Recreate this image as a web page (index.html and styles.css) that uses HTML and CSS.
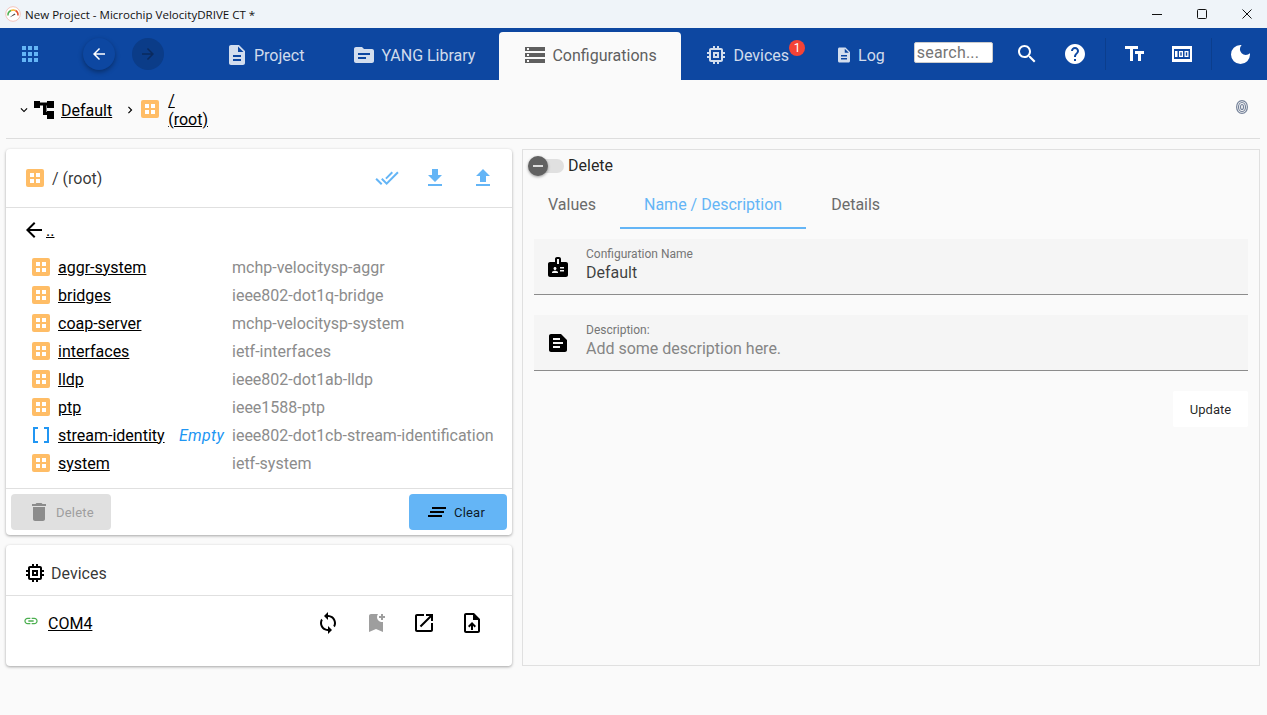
FILE: index.html
```html
<!DOCTYPE html>
<html lang="en">
<head>
    <meta charset="UTF-8">
    <title>New Project - Microchip VelocityDRIVE CT *</title>
    <link rel="stylesheet" href="styles.css">
</head>
<body>
    <svg class="sprite" xmlns="http://www.w3.org/2000/svg">
        <symbol id="i-container" viewBox="0 0 18 18">
            <rect width="18" height="18" rx="2" fill="#ffbd66"/>
            <path d="M4 4h4v4H4zM10 4h4v4h-4zM4 10h4v4H4zM10 10h4v4h-4z" fill="#fff"/>
        </symbol>
        <symbol id="i-memory" viewBox="0 0 24 24"><path d="M15 9H9v6h6V9zm-2 4h-2v-2h2v2zm8-2V9h-2V7c0-1.1-.9-2-2-2h-2V3h-2v2h-2V3H9v2H7c-1.1 0-2 .9-2 2v2H3v2h2v2H3v2h2v2c0 1.1.9 2 2 2h2v2h2v-2h2v2h2v-2h2c1.1 0 2-.9 2-2v-2h2v-2h-2v-2h2zm-4 6H7V7h10v10z"/></symbol>
        <symbol id="i-description" viewBox="0 0 24 24"><path d="M14 2H6c-1.1 0-1.99.9-1.99 2L4 20c0 1.1.89 2 1.99 2H18c1.1 0 2-.9 2-2V8l-6-6zm2 16H8v-2h8v2zm0-4H8v-2h8v2zm-3-5V3.5L18.5 9H13z"/></symbol>
    </svg>

    <header class="titlebar">
        <svg class="app-logo" viewBox="0 0 16 16" width="16" height="16">
            <circle cx="8" cy="8" r="7.300" fill="#fff" stroke="#f3c4bc"/>
            <path d="M3 9.500a5 5 0 0 1 3-5" fill="none" stroke="#4caf50" stroke-width="1.500"/>
            <path d="M6 4.500a5 5 0 0 1 4.500 0" fill="none" stroke="#f5b82e" stroke-width="1.500"/>
            <path d="M10.500 4.500a5 5 0 0 1 2.500 5" fill="none" stroke="#e2502f" stroke-width="1.500"/>
            <path d="M4.500 11.500l5-4 1 1z" fill="#444"/>
        </svg>
        <span class="window-title">New Project - Microchip VelocityDRIVE CT *</span>
        <div class="window-buttons">
            <svg viewBox="0 0 12 12" width="12" height="12"><path d="M1 6.500h10" stroke="#111" fill="none"/></svg>
            <svg viewBox="0 0 12 12" width="12" height="12"><rect x="1.500" y="1.500" width="9" height="9" rx="1" stroke="#111" fill="none"/></svg>
            <svg viewBox="0 0 12 12" width="12" height="12"><path d="M1.500 1.500l9 9M10.500 1.500l-9 9" stroke="#111" fill="none"/></svg>
        </div>
    </header>

    <nav class="navbar">
        <svg class="apps-icon" viewBox="0 0 24 24" width="24" height="24"><path d="M4 8h4V4H4v4zm6 12h4v-4h-4v4zm-6 0h4v-4H4v4zm0-6h4v-4H4v4zm6 0h4v-4h-4v4zm6-10v4h4V4h-4zm-6 4h4V4h-4v4zm6 6h4v-4h-4v4zm0 6h4v-4h-4v4z"/></svg>
        <button class="round-btn">
            <svg viewBox="0 0 24 24" width="18" height="18"><path d="M20 11H7.830l5.590-5.590L12 4l-8 8 8 8 1.410-1.410L7.830 13H20v-2z"/></svg>
        </button>
        <button class="round-btn is-disabled">
            <svg viewBox="0 0 24 24" width="18" height="18"><path d="M12 4l-1.410 1.410L16.170 11H4v2h12.170l-5.580 5.590L12 20l8-8z"/></svg>
        </button>

        <a class="nav-tab tab-project">
            <svg viewBox="0 0 24 24" width="24" height="24"><use href="#i-description"/></svg>Project
        </a>
        <a class="nav-tab tab-yang">
            <svg viewBox="0 0 24 24" width="24" height="24"><path d="M20 6h-8l-2-2H4c-1.100 0-1.990.9-1.990 2L2 18c0 1.100.9 2 2 2h16c1.100 0 2-.9 2-2V8c0-1.100-.9-2-2-2zm-6 10H6v-2h8v2zm4-4H6v-2h12v2z"/></svg>YANG Library
        </a>
        <a class="nav-tab tab-config is-active">
            <svg viewBox="0 0 24 24" width="24" height="24"><path d="M2 20h20v-4H2v4zm2-3h2v2H4v-2zM2 4v4h20V4H2zm4 3H4V5h2v2zm-4 7h20v-4H2v4zm2-3h2v2H4v-2z"/></svg>Configurations
        </a>
        <a class="nav-tab tab-devices">
            <svg viewBox="0 0 24 24" width="24" height="24"><use href="#i-memory"/></svg>Devices
            <span class="badge">1</span>
        </a>
        <a class="nav-tab tab-log">
            <svg viewBox="0 0 24 24" width="18" height="18"><use href="#i-description"/></svg>Log
        </a>

        <input class="search-box" type="text" placeholder="search...">

        <div class="nav-tools">
            <svg class="tool-search" viewBox="0 0 24 24" width="24" height="24"><path d="M15.500 14h-.79l-.28-.27C15.410 12.590 16 11.110 16 9.500 16 5.910 13.090 3 9.500 3S3 5.910 3 9.500 5.910 16 9.500 16c1.610 0 3.090-.59 4.230-1.570l.27.28v.79l5 4.990L20.490 19l-4.990-5zm-6 0C7.010 14 5 11.990 5 9.500S7.010 5 9.500 5 14 7.010 14 9.500 11.990 14 9.500 14z"/></svg>
            <svg class="tool-help" viewBox="0 0 24 24" width="24" height="24"><path d="M12 2C6.480 2 2 6.480 2 12s4.480 10 10 10 10-4.480 10-10S17.520 2 12 2zm1 17h-2v-2h2v2zm2.070-7.750l-.9.920C13.450 12.900 13 13.500 13 15h-2v-.5c0-1.100.45-2.100 1.170-2.830l1.240-1.260c.37-.36.59-.86.59-1.410 0-1.100-.9-2-2-2s-2 .9-2 2H8c0-2.210 1.790-4 4-4s4 1.790 4 4c0 .88-.36 1.680-.93 2.250z"/></svg>
            <span class="tool-divider"></span>
            <svg class="tool-size" viewBox="0 0 24 24" width="24" height="24"><path d="M2 4v3h5v12h3V7h5V4H2zM21 9h-9v3h3v7h3v-7h3V9z"/></svg>
            <svg class="tool-counter" viewBox="0 0 24 24" width="24" height="24"><path fill-rule="evenodd" d="M2 4h20v16H2V4zm2 3v10h16V7H4zm1 2h2.500v6H5V9zm4 0h4v6H9V9zm1.300 1.300v3.400h1.400v-3.400h-1.400zM14.500 9h4v6h-4V9zm1.300 1.300v3.400h1.400v-3.400h-1.400z"/></svg>
            <span class="tool-divider second"></span>
            <svg class="tool-moon" viewBox="0 0 24 24" width="24" height="24"><path d="M11.500 3a9.500 9.500 0 1 0 9.500 9.500c0-.4 0-.8-.1-1.200a5.700 5.700 0 0 1-8.300-8.200c-.3-.1-.7-.1-1.100-.1z"/></svg>
        </div>
    </nav>

    <section class="breadcrumb">
        <svg class="crumb-chevron" viewBox="0 0 24 24" width="14" height="14"><path d="M16.590 8.590L12 13.170 7.410 8.590 6 10l6 6 6-6z"/></svg>
        <svg class="crumb-tree" viewBox="0 0 20 18" width="20" height="18"><path d="M0 0h6v1.500h7V0h7v7h-7V4.500h-.5V11h.5v-1h7v8h-7v-4H9V4.500H6V7H0z"/></svg>
        <a class="link crumb-default">Default</a>
        <svg class="crumb-next" viewBox="0 0 24 24" width="14" height="14"><path d="M10 6L8.590 7.410 13.170 12l-4.580 4.590L10 18l6-6z"/></svg>
        <svg class="box-icon" width="18" height="18"><use href="#i-container"/></svg>
        <a class="link crumb-root">/<br>(root)</a>
        <svg class="crumb-print" viewBox="0 0 12 14" width="12" height="14" fill="none" stroke="#76839a" stroke-width="1.200">
            <ellipse cx="6" cy="7" rx="5.400" ry="6.400"/>
            <ellipse cx="6" cy="7" rx="3.500" ry="4.500"/>
            <ellipse cx="6" cy="7" rx="1.500" ry="2.500"/>
        </svg>
    </section>

    <main class="workspace">
        <div class="left-col">
            <section class="card tree-card">
                <div class="card-head">
                    <svg class="box-icon" width="18" height="18"><use href="#i-container"/></svg>
                    <span class="card-title">/ (root)</span>
                    <div class="head-actions">
                        <svg viewBox="0 0 24 24" width="24" height="24"><path d="M18 7l-1.410-1.410-6.340 6.340 1.410 1.410L18 7zm4.240-1.410L11.660 16.170 7.480 12l-1.410 1.410L11.660 19l12-12-1.420-1.410zM.41 13.410L6 19l1.410-1.410L1.830 12 .41 13.410z"/></svg>
                        <svg viewBox="0 0 24 24" width="24" height="24"><path d="M19 9h-4V3H9v6H5l7 7 7-7zM5 18v2h14v-2H5z"/></svg>
                        <svg viewBox="0 0 24 24" width="24" height="24"><path d="M9 16h6v-6h4l-7-7-7 7h4v6zm-4 2h14v2H5v-2z"/></svg>
                    </div>
                </div>
                <div class="tree-body">
                    <div class="up-row">
                        <svg viewBox="0 0 24 24" width="24" height="24"><path d="M20 11H7.830l5.590-5.590L12 4l-8 8 8 8 1.410-1.410L7.830 13H20v-2z"/></svg>
                        <a class="link up-link">..</a>
                    </div>
                    <ul class="node-list">
                        <li class="node"><svg class="box-icon" width="18" height="18"><use href="#i-container"/></svg><a class="link">aggr-system</a><span></span><span class="module">mchp-velocitysp-aggr</span></li>
                        <li class="node"><svg class="box-icon" width="18" height="18"><use href="#i-container"/></svg><a class="link">bridges</a><span></span><span class="module">ieee802-dot1q-bridge</span></li>
                        <li class="node"><svg class="box-icon" width="18" height="18"><use href="#i-container"/></svg><a class="link">coap-server</a><span></span><span class="module">mchp-velocitysp-system</span></li>
                        <li class="node"><svg class="box-icon" width="18" height="18"><use href="#i-container"/></svg><a class="link">interfaces</a><span></span><span class="module">ietf-interfaces</span></li>
                        <li class="node"><svg class="box-icon" width="18" height="18"><use href="#i-container"/></svg><a class="link">lldp</a><span></span><span class="module">ieee802-dot1ab-lldp</span></li>
                        <li class="node"><svg class="box-icon" width="18" height="18"><use href="#i-container"/></svg><a class="link">ptp</a><span></span><span class="module">ieee1588-ptp</span></li>
                        <li class="node"><svg class="list-icon" viewBox="0 0 18 18" width="18" height="18"><path d="M6 2H2v14h4M12 2h4v14h-4" fill="none" stroke="#2196f3" stroke-width="2"/></svg><a class="link">stream-identity</a><span class="empty-tag">Empty</span><span class="module">ieee802-dot1cb-stream-identification</span></li>
                        <li class="node"><svg class="box-icon" width="18" height="18"><use href="#i-container"/></svg><a class="link">system</a><span></span><span class="module">ietf-system</span></li>
                    </ul>
                </div>
                <div class="card-foot">
                    <button class="btn btn-disabled">
                        <svg viewBox="0 0 24 24" width="24" height="24"><path d="M6 19c0 1.100.9 2 2 2h8c1.100 0 2-.9 2-2V7H6v12zM19 4h-3.500l-1-1h-5l-1 1H5v2h14V4z"/></svg>Delete
                    </button>
                    <button class="btn btn-primary">
                        <svg viewBox="0 0 24 24" width="24" height="24"><path d="M5 13h14v-2H5v2zm-2 4h14v-2H3v2zM7 7v2h14V7H7z"/></svg>Clear
                    </button>
                </div>
            </section>

            <section class="card devices-card">
                <div class="devices-head">
                    <svg viewBox="0 0 24 24" width="24" height="24"><use href="#i-memory"/></svg>
                    <span class="card-title">Devices</span>
                </div>
                <div class="device-row">
                    <svg class="link-icon" viewBox="0 0 24 24" width="16" height="16"><path d="M3.900 12c0-1.710 1.390-3.100 3.100-3.100h4V7H7c-2.760 0-5 2.240-5 5s2.240 5 5 5h4v-1.900H7c-1.710 0-3.100-1.390-3.100-3.100zM8 13h8v-2H8v2zm9-6h-4v1.900h4c1.710 0 3.100 1.390 3.100 3.100s-1.390 3.100-3.100 3.100h-4V17h4c2.760 0 5-2.240 5-5s-2.240-5-5-5z"/></svg>
                    <a class="link device-name">COM4</a>
                    <div class="device-actions">
                        <svg viewBox="0 0 24 24" width="24" height="24"><path d="M12 4V1L8 5l4 4V6c3.310 0 6 2.690 6 6 0 1.010-.25 1.970-.7 2.800l1.460 1.460C19.540 15.030 20 13.570 20 12c0-4.420-3.580-8-8-8zm0 14c-3.310 0-6-2.690-6-6 0-1.010.25-1.970.7-2.800L5.240 7.740C4.460 8.970 4 10.430 4 12c0 4.420 3.580 8 8 8v3l4-4-4-4v3z"/></svg>
                        <svg class="is-muted" viewBox="0 0 24 24" width="24" height="24"><path d="M21 7h-2v2h-2V7h-2V5h2V3h2v2h2v2zm-2 14l-7-3-7 3V5c0-1.100.9-2 2-2h7c-.63.84-1 1.870-1 3 0 2.760 2.240 5 5 5 .34 0 .68-.03 1-.1V21z"/></svg>
                        <svg viewBox="0 0 24 24" width="24" height="24"><path d="M19 19H5V5h7V3H5c-1.110 0-2 .9-2 2v14c0 1.100.89 2 2 2h14c1.100 0 2-.9 2-2v-7h-2v7zM14 3v2h3.590l-9.830 9.830 1.410 1.410L19 6.410V10h2V3h-7z"/></svg>
                        <svg viewBox="0 0 24 24" width="24" height="24"><path d="M14 2H6c-1.100 0-1.990.9-1.990 2L4 20c0 1.100.89 2 1.990 2H18c1.100 0 2-.9 2-2V8l-6-6zm4 18H6V4h7v5h5v11zM8 15.010l1.410 1.410L11 14.840V19h2v-4.160l1.590 1.590L16 15.010 12.010 11 8 15.010z"/></svg>
                    </div>
                </div>
            </section>
        </div>

        <section class="detail-panel">
            <div class="toggle-row">
                <span class="toggle">
                    <span class="toggle-thumb"></span>
                </span>
                <span class="toggle-label">Delete</span>
            </div>
            <div class="detail-tabs">
                <a class="detail-tab">Values</a>
                <a class="detail-tab is-active">Name / Description</a>
                <a class="detail-tab">Details</a>
            </div>
            <div class="field">
                <svg viewBox="0 0 24 24" width="24" height="24"><path d="M20 7h-5V4c0-1.100-.9-2-2-2h-2c-1.100 0-2 .9-2 2v3H4c-1.100 0-2 .9-2 2v11c0 1.100.9 2 2 2h16c1.100 0 2-.9 2-2V9c0-1.100-.9-2-2-2zM9 12c.83 0 1.500.67 1.500 1.500S9.830 15 9 15s-1.500-.67-1.500-1.500S8.170 12 9 12zm3 6H6v-.75c0-1 2-1.500 3-1.500s3 .5 3 1.500V18zm1-9h-2V4h2v5zm5 7.500h-4V15h4v1.500zm0-3h-4V12h4v1.500z"/></svg>
                <div class="field-text">
                    <label>Configuration Name</label>
                    <span class="field-value">Default</span>
                </div>
            </div>
            <div class="field">
                <svg viewBox="0 0 24 24" width="24" height="24"><path d="M5 3h10l6 6v10c0 1.100-.9 2-2 2H5c-1.100 0-2-.9-2-2V5c0-1.100.9-2 2-2zm2 14h7v-2H7v2zm0-4h10v-2H7v2zm0-4h7V7H7v2z"/></svg>
                <div class="field-text">
                    <label>Description:</label>
                    <span class="field-value is-placeholder">Add some description here.</span>
                </div>
            </div>
            <div class="panel-actions">
                <button class="btn-update">Update</button>
            </div>
        </section>
    </main>
</body>
</html>
```

FILE: styles.css
```css
* {
    margin: 0;
    padding: 0;
    box-sizing: border-box;
}
html, body {
    height: 100%;
    overflow: hidden;
}
body {
    background-color: #fafafa;
    font-family: Roboto, "Liberation Sans", sans-serif;
    font-size: 16px;
    color: rgba(0, 0, 0, 0.87);
}
button {
    font-family: inherit;
    border: none;
}
.sprite {
    display: none;
}
svg {
    flex-shrink: 0;
    display: block;
}
.link {
    color: #000;
    text-decoration: underline;
}

/* window title */
.titlebar {
    height: 28px;
    background-color: #eff4f9;
    display: flex;
    align-items: center;
    padding-left: 5px;
}
.window-title {
    margin-left: 4px;
    font-family: "Open Sans", "Liberation Sans", sans-serif;
    font-size: 11.550px;
    color: #111;
}
.window-buttons {
    margin-left: auto;
    display: flex;
    gap: 33px;
    padding-right: 14px;
}

/* top nav */
.navbar {
    height: 52px;
    background-color: #0d47a1;
    display: flex;
    align-items: center;
    padding-left: 18px;
    color: rgba(255, 255, 255, 0.82);
}
.navbar svg {
    fill: currentColor;
}
.apps-icon {
    fill: #64b5f6 !important;
    margin-right: 41px;
}
.round-btn {
    width: 32px;
    height: 32px;
    border-radius: 50%;
    background-color: #0d47a1;
    color: #fff;
    display: flex;
    justify-content: center;
    align-items: center;
    margin-right: 17px;
    box-shadow: 0 2px 5px rgba(0, 0, 0, 0.35);
}
.round-btn.is-disabled {
    background-color: #0b3c88;
    color: #0a2a5e;
    box-shadow: none;
    margin-right: 0;
}
.nav-tab {
    display: flex;
    align-items: center;
    height: 52px;
    position: relative;
    gap: 5px;
    padding-top: 2px;
}
.tab-project {
    margin-left: 61px;
}
.tab-yang {
    margin-left: 48px;
}
.tab-config {
    margin-left: 24px;
    width: 182px;
    height: 48px;
    margin-top: 4px;
    padding-top: 0;
    padding-bottom: 2px;
    padding-left: 24px;
    gap: 5px;
    background-color: #fafafa;
    color: #5f5f5f;
    border-radius: 4px 4px 0 0;
}
.tab-devices {
    margin-left: 23px;
}
.tab-log {
    margin-left: 46px;
}
.badge {
    position: absolute;
    top: 12px;
    right: -16px;
    width: 16px;
    height: 16px;
    border-radius: 50%;
    background-color: #f44336;
    color: #fff;
    font-size: 12px;
    text-align: center;
    line-height: 16px;
}
.search-box {
    margin-left: 29px;
    margin-top: -4px;
    width: 79px;
    height: 21px;
    border: 1px solid #ccc;
    border-radius: 2px;
    padding: 0 2px;
    font-family: Roboto, sans-serif;
    font-size: 16px;
    letter-spacing: 0.2px;
    background-color: #fff;
}
.search-box::placeholder {
    color: #757575;
}
.nav-tools {
    display: flex;
    align-items: center;
    margin-left: 22px;
    color: #fff;
}
.tool-help {
    margin-left: 24px;
}
.tool-divider {
    width: 1px;
    height: 32px;
    margin-left: 18px;
    background-color: rgba(0, 0, 0, 0.12);
}
.tool-size {
    margin-left: 17px;
}
.tool-counter {
    margin-left: 23px;
}
.tool-divider.second {
    margin-left: 17px;
}
.tool-moon {
    margin-left: 17px;
}

/* breadcrumb */
.breadcrumb {
    height: 59px;
    margin: 0 7px 0 6px;
    border-bottom: 1px solid #ddd;
    display: flex;
    align-items: center;
    padding-top: 1px;
}
.crumb-chevron {
    margin-left: 11px;
}
.crumb-tree {
    margin-left: 3px;
}
.crumb-default {
    margin-left: 7px;
    margin-top: 1px;
}
.crumb-next {
    margin-left: 11px;
}
.breadcrumb .box-icon {
    margin-left: 4px;
    margin-top: -1px;
}
.crumb-root {
    margin-left: 9px;
    line-height: 19px;
}
.crumb-print {
    margin-left: auto;
    margin-right: 12px;
    margin-top: -5px;
}

/* main area */
.workspace {
    display: flex;
    padding: 10px 7px 0 6px;
    gap: 10px;
}
.left-col {
    width: 506px;
    display: flex;
    flex-direction: column;
    gap: 10px;
}
.card {
    background-color: #fff;
    border-radius: 4px;
    box-shadow: 0 1px 3px rgba(0, 0, 0, 0.35);
}
.card-head {
    height: 59px;
    display: flex;
    align-items: center;
    padding-left: 20px;
    border-bottom: 1px solid #e0e0e0;
}
.card-title {
    margin-left: 8px;
    color: rgba(0, 0, 0, 0.8);
}
.head-actions {
    margin-left: auto;
    display: flex;
    gap: 24px;
    padding-right: 17px;
    fill: #64b5f6;
}
.tree-body {
    height: 280px;
    padding-top: 9px;
}
.up-row {
    display: flex;
    align-items: center;
    height: 26px;
    padding-left: 16px;
}
.up-link {
    font-size: 16px;
}
.node-list {
    list-style: none;
    margin-top: 10px;
    padding-left: 26px;
}
.node {
    display: grid;
    grid-template-columns: 26px 121px 53px auto;
    align-items: center;
    height: 28px;
}
.empty-tag {
    color: #2196f3;
    font-style: italic;
    letter-spacing: 0.3px;
}
.module {
    color: #8c8c8c;
    white-space: nowrap;
}
.card-foot {
    height: 47px;
    border-top: 1px solid #e0e0e0;
    display: flex;
    justify-content: space-between;
    padding: 5px;
}
.btn {
    height: 36px;
    border-radius: 4px;
    display: flex;
    align-items: center;
    font-size: 13px;
    letter-spacing: 0.2px;
}
.btn-disabled {
    width: 100px;
    padding-left: 16px;
    gap: 5px;
    background-color: #e0e0e0;
    color: #9e9e9e;
    fill: #8c8c8c;
}
.btn-primary {
    width: 98px;
    padding-left: 16px;
    gap: 5px;
    background-color: #64b5f6;
    color: rgba(0, 0, 0, 0.87);
}
.devices-card {
    height: 121px;
}
.devices-head {
    height: 51px;
    display: flex;
    align-items: center;
    padding: 6px 0 0 17px;
    border-bottom: 1px solid #e0e0e0;
}
.devices-head .card-title {
    margin-left: 4px;
}
.device-row {
    display: flex;
    align-items: center;
    height: 54px;
    padding-left: 17px;
}
.link-icon {
    fill: #4caf50;
    margin-top: -4px;
}
.device-name {
    margin-left: 9px;
}
.device-actions {
    margin-left: auto;
    display: flex;
    gap: 24px;
    padding-right: 28px;
}
.device-actions .is-muted {
    fill: #9e9e9e;
}

/* right panel */
.detail-panel {
    flex: 1;
    height: 517px;
    border: 1px solid #e0e0e0;
    display: flex;
    flex-direction: column;
    padding: 0 11px;
}
.toggle-row {
    display: flex;
    align-items: center;
    gap: 4px;
    height: 32px;
    margin-left: -4px;
}
.toggle-label {
    margin-top: -2px;
}
.toggle {
    position: relative;
    display: block;
    width: 34px;
    height: 14px;
    border-radius: 7px;
    background-color: #e0e0e0;
}
.toggle-thumb {
    position: absolute;
    top: -3px;
    left: -2px;
    width: 20px;
    height: 20px;
    border-radius: 50%;
    background-color: #616161;
    box-shadow: 0 1px 3px rgba(0, 0, 0, 0.4);
}
.toggle-thumb::after {
    content: "";
    position: absolute;
    left: 5px;
    top: 9px;
    width: 10px;
    height: 2px;
    background-color: #ddd;
}
.detail-tabs {
    display: flex;
    height: 47px;
    margin: 0 0 10px -10px;
}
.detail-tab {
    height: 47px;
    padding: 0 24px 1px;
    display: flex;
    align-items: center;
    color: #6b6b6b;
    border-bottom: 2px solid transparent;
}
.detail-tab:last-child {
    margin-left: 1px;
}
.detail-tab.is-active {
    color: #64b5f6;
    border-bottom-color: #64b5f6;
}
.field {
    height: 56px;
    margin-bottom: 20px;
    background-color: #f5f5f5;
    border-bottom: 1px solid #8c8c8c;
    display: flex;
    align-items: center;
    padding-left: 12px;
}
.field-text {
    margin-left: 16px;
    padding-bottom: 5px;
    display: flex;
    flex-direction: column;
}
.field-text label {
    font-size: 12px;
    line-height: 14px;
    color: #757575;
    margin-bottom: 2px;
}
.field-value {
    line-height: 19px;
    color: rgba(0, 0, 0, 0.75);
}
.field-value.is-placeholder {
    color: #858585;
}
.panel-actions {
    display: flex;
    justify-content: flex-end;
}
.btn-update {
    width: 75px;
    height: 36px;
    background-color: #fff;
    color: rgba(0, 0, 0, 0.87);
    font-size: 13px;
    border-radius: 2px;
}
```
